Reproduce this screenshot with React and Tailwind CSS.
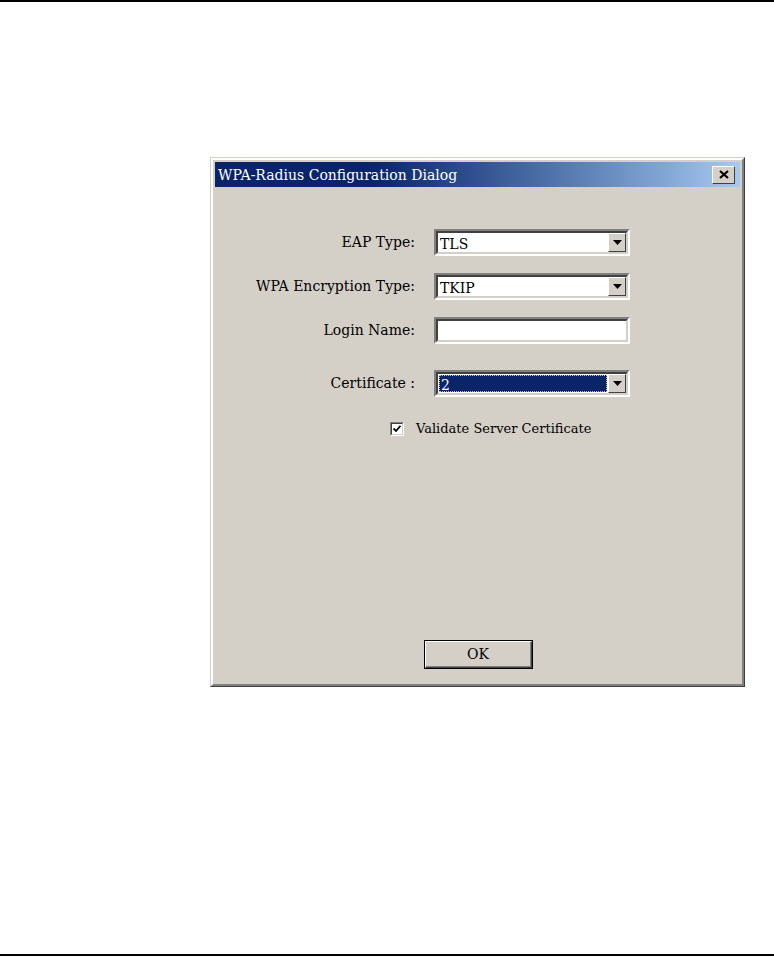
import React from 'react';

const serif = { fontFamily: '"DejaVu Serif", "Liberation Serif", serif' };

function DropArrow() {
  return (
    <div className="w-[18px] h-full bg-[#d4d0c8] border border-t-white border-l-white border-r-[#404040] border-b-[#404040] flex items-center justify-center">
      <svg width="9" height="5" viewBox="0 0 9 5"><path d="M0 0h9L4.5 5z" fill="#000" /></svg>
    </div>
  );
}

// sunken win-classic box
function Sunken({ children, className = '' }) {
  return (
    <div className={`w-[196px] h-[27px] border-2 border-t-[#808080] border-l-[#808080] border-r-white border-b-white ${className}`}>
      <div className="w-full h-full border-2 border-t-[#404040] border-l-[#404040] border-r-[#d4d0c8] border-b-[#d4d0c8] bg-white flex">
        {children}
      </div>
    </div>
  );
}

function Row({ label, children, className = '' }) {
  return (
    <div className={`flex items-center ${className}`}>
      <div className="w-[200px] text-right text-[14px] text-black">{label}</div>
      <div className="ml-[19px]">{children}</div>
    </div>
  );
}

export default function App() {
  return (
    <div className="w-[774px] h-[957px] bg-white flex flex-col" style={serif}>
      <div className="h-[2px] bg-black w-full" />

      <div className="pl-[210px] pt-[155px]">
        {/* dialog frame */}
        <div className="w-[535px] h-[530px] border border-t-[#d4d0c8] border-l-[#d4d0c8] border-r-[#404040] border-b-[#404040]">
          <div className="w-full h-full border-2 border-t-white border-l-white border-r-[#808080] border-b-[#808080] bg-[#d4d0c8] p-[2px] flex flex-col">
            {/* title bar */}
            <div className="h-[25px] bg-gradient-to-r from-[#0a246a] via-[#0a246a] via-[30%] to-[#a6caf0] flex items-center pl-[3px] pr-[5px]">
              <span className="text-white text-[14px] leading-none">WPA-Radius Configuration Dialog</span>
              <div className="ml-auto w-[23px] h-[18px] bg-[#d4d0c8] border border-t-white border-l-white border-r-[#404040] border-b-[#404040] flex items-center justify-center">
                <svg width="10" height="9" viewBox="0 0 10 9">
                  <path d="M1 1L9 8M9 1L1 8" stroke="#000" strokeWidth="2.2" />
                </svg>
              </div>
            </div>

            {/* body */}
            <div className="flex flex-col pt-[42px]">
              <Row label="EAP Type:">
                <Sunken>
                  <span className="flex-1 pl-[2px] text-[14px] leading-[23px]">TLS</span>
                  <DropArrow />
                </Sunken>
              </Row>
              <Row label="WPA Encryption Type:" className="mt-[17px]">
                <Sunken>
                  <span className="flex-1 pl-[2px] text-[14px] leading-[23px]">TKIP</span>
                  <DropArrow />
                </Sunken>
              </Row>
              <Row label="Login Name:" className="mt-[17px]">
                <Sunken />
              </Row>
              <Row label="Certificate :" className="mt-[26px]">
                <Sunken>
                  <div className="flex-1 bg-[#0a246a] border border-dotted border-[#e0c060] m-[1px] text-white text-[14px] leading-[19px] pl-[1px]">2</div>
                  <DropArrow />
                </Sunken>
              </Row>

              <div className="flex items-center mt-[22px] pl-[175px]">
                <div className="w-[14px] h-[14px] border border-t-[#808080] border-l-[#808080] border-r-white border-b-white">
                  <div className="w-full h-full border border-t-[#404040] border-l-[#404040] border-r-[#d4d0c8] border-b-[#d4d0c8] bg-white flex items-center justify-center">
                    <svg width="8" height="7" viewBox="0 0 8 7">
                      <path d="M0.5 3.5L3 6L7.5 0.8" stroke="#000" strokeWidth="1.8" fill="none" />
                    </svg>
                  </div>
                </div>
                <span className="ml-[12px] text-[13px] text-black">Validate Server Certificate</span>
              </div>
            </div>

            <div className="mt-auto mb-[13px] pl-[209px]">
              <div className="w-[109px] h-[29px] border border-black">
                <div className="w-full h-full border border-t-white border-l-white border-r-[#404040] border-b-[#404040]">
                  <div className="w-full h-full border-b border-r border-[#808080] flex items-center justify-center text-[14px] text-black">OK</div>
                </div>
              </div>
            </div>
          </div>
        </div>
      </div>

      <div className="mt-auto mb-[1px] h-[2px] bg-black w-full" />
    </div>
  );
}
